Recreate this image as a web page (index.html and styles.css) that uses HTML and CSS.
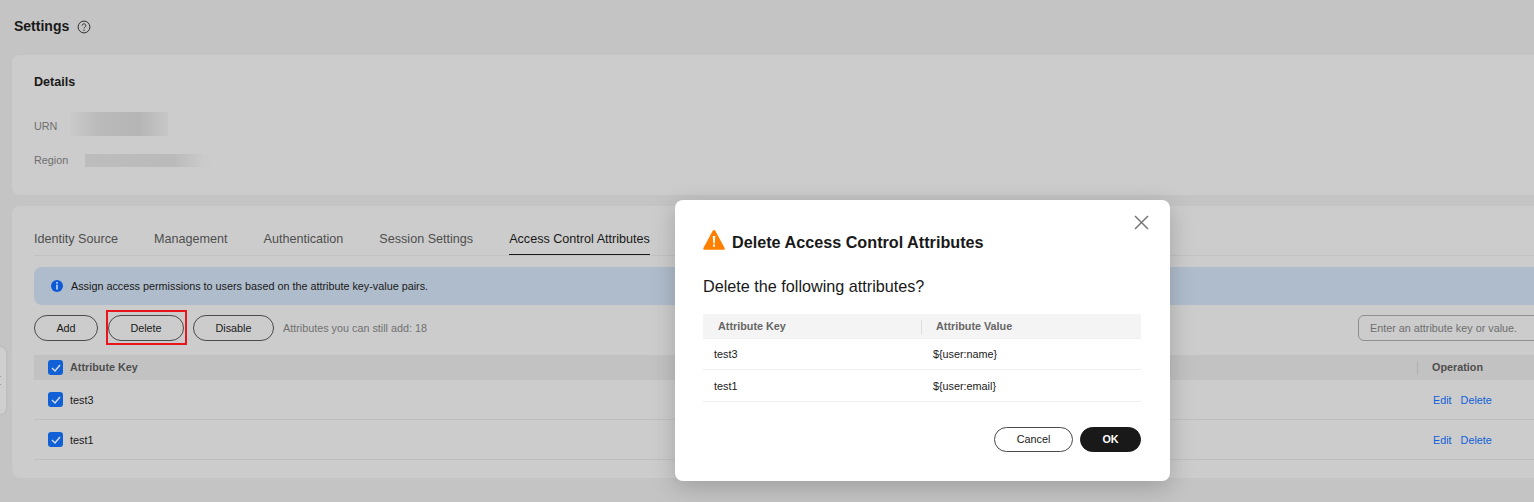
FILE: index.html
```html
<!DOCTYPE html>
<html lang="en">
<head>
<meta charset="utf-8">
<title>Settings</title>
<link rel="stylesheet" href="styles.css">
</head>
<body>
<div class="page">
  <div class="page-head">
    <h1>Settings</h1>
    <svg class="help" width="14" height="14" viewBox="0 0 14 14"><circle cx="7" cy="7" r="5.9" fill="none" stroke="#333" stroke-width="1"/><path d="M5.2 5.6a1.8 1.8 0 1 1 2.8 1.5c-.7.4-1 .7-1 1.3" fill="none" stroke="#333" stroke-width="1"/><circle cx="7" cy="10.2" r=".7" fill="#333"/></svg>
  </div>
  <section class="card details">
    <h2>Details</h2>
    <div class="field urn"><span class="label">URN</span><span class="blur-urn"></span></div>
    <div class="field region"><span class="label">Region</span><span class="blur-region"></span></div>
  </section>
  <section class="card main">
    <nav class="tabs">
      <span>Identity Source</span><span>Management</span><span>Authentication</span><span>Session Settings</span><span class="active">Access Control Attributes</span>
    </nav>
    <div class="notice">
      <svg width="12" height="12" viewBox="0 0 12 12"><circle cx="6" cy="6" r="6" fill="#0d5ad6"/><rect x="5.2" y="2" width="1.6" height="1.6" fill="#c9d6ea"/><rect x="5.2" y="4.6" width="1.6" height="5" fill="#c9d6ea"/></svg>
      <span>Assign access permissions to users based on the attribute key-value pairs.</span>
    </div>
    <div class="toolbar">
      <button class="btn add">Add</button>
      <button class="btn del">Delete</button>
      <button class="btn dis">Disable</button>
      <span class="quota">Attributes you can still add: 18</span>
      <div class="search">Enter an attribute key or value.</div>
    </div>
    <div class="row head">
      <span class="check"><svg width="10" height="8" viewBox="0 0 10 8"><path d="M1 4l3 3 5-6" fill="none" stroke="#d5dfee" stroke-width="1.4"/></svg></span>
      <span class="key">Attribute Key</span>
      <span class="op"><i class="sep"></i>Operation</span>
    </div>
    <div class="row">
      <span class="check"><svg width="10" height="8" viewBox="0 0 10 8"><path d="M1 4l3 3 5-6" fill="none" stroke="#d5dfee" stroke-width="1.4"/></svg></span>
      <span class="key val">test3</span>
      <span class="op links"><a>Edit</a><a>Delete</a></span>
    </div>
    <div class="row">
      <span class="check"><svg width="10" height="8" viewBox="0 0 10 8"><path d="M1 4l3 3 5-6" fill="none" stroke="#d5dfee" stroke-width="1.4"/></svg></span>
      <span class="key val">test1</span>
      <span class="op links"><a>Edit</a><a>Delete</a></span>
    </div>
  </section>
</div>
<div class="handle"><i></i><i></i></div>
<div class="highlight"></div>
<div class="dialog">
  <svg class="close" width="15" height="15" viewBox="0 0 15 15"><path d="M1 1l13 13M14 1L1 14" stroke="#777" stroke-width="1.5" fill="none"/></svg>
  <div class="dlg-title">
    <svg class="warn" width="22" height="20" viewBox="0 0 22 20"><path d="M11 0c.6 0 1 .3 1.300.8l9.300 17.200c.4.900-.1 1.800-1 1.800H1.400c-.9 0-1.400-.9-1-1.800L9.700.8c.3-.5.700-.8 1.300-.8z" fill="#ff8000"/><path d="M9.700 6h2.600l-.6 7.500h-1.400z" fill="#fff"/><rect x="10" y="14.500" width="2" height="2.200" fill="#fff"/></svg>
    <h3>Delete Access Control Attributes</h3>
  </div>
  <p class="question">Delete the following attributes?</p>
  <div class="dlg-table">
    <div class="dlg-row dlg-head"><span class="k">Attribute Key</span><span class="v"><i class="sep"></i>Attribute Value</span></div>
    <div class="dlg-row"><span class="k">test3</span><span class="v">${user:name}</span></div>
    <div class="dlg-row dlg-last"><span class="k">test1</span><span class="v">${user:email}</span></div>
  </div>
  <div class="dlg-actions">
    <button class="btn cancel">Cancel</button>
    <button class="btn ok">OK</button>
  </div>
</div>
</body>
</html>
```
FILE: styles.css
```css
* { box-sizing: border-box; }
html, body { margin: 0; height: 502px; overflow: hidden; }
body { background: #c4c4c4; font-family: "Liberation Sans", Arial, sans-serif; color: #191919; position: relative; }
.page { padding: 0 0 0 12px; width: 1546px; }
.page-head { height: 55px; display: flex; align-items: center; padding: 0 0 4px 2px; gap: 8px; }
h1 { font-size: 14px; font-weight: 700; margin: 0; }
.help { margin-top: 2px; }
.card { background: #cccccc; border-radius: 8px 0 0 8px; }
.details { height: 140px; padding: 19px 22px; }
h2 { font-size: 12.600px; font-weight: 700; margin: 0; line-height: 16px; }
.field { display: flex; align-items: center; font-size: 10.800px; color: #6e6e6e; }
.urn { margin-top: 22px; height: 24px; }
.urn .label { width: 37px; padding-top: 4px; }
.blur-urn { width: 97px; height: 24px; background: linear-gradient(90deg, #c9c9c9, #bababa 30%, #b5b5b5 70%, #c7c7c7); }
.region { margin-top: 18px; height: 13px; }
.region .label { width: 51px; padding-bottom: 2px; }
.blur-region { width: 126px; height: 13px; background: linear-gradient(90deg, #bdbdbd, #bababa 70%, #cbcbcb 95%); }
.main { margin-top: 11px; height: 272px; padding: 0 0 0 22px; }
.tabs { display: flex; gap: 36px; height: 50px; font-size: 12.600px; color: #4e4e4e; align-items: flex-start; padding-top: 24px; border-bottom: 1px solid #c2c2c2; }
.tabs span { height: 25px; line-height: 19px; }
.tabs .active { color: #191919; border-bottom: 1px solid #191919; }
.notice { margin-top: 11px; height: 38px; background: #afbccb; border-radius: 8px 0 0 8px; display: flex; align-items: center; gap: 8px; padding-left: 17px; font-size: 10.800px; color: #191919; }
.toolbar { margin-top: 10px; height: 26px; display: flex; align-items: center; position: relative; }
.btn { height: 26px; border-radius: 13px; border: 1px solid #4a4a4a; background: transparent; font: 10.800px "Liberation Sans", Arial, sans-serif; color: #191919; padding: 0; }
.add { width: 64px; }
.del { width: 76px; margin-left: 10px; }
.dis { width: 81px; margin-left: 9px; }
.quota { margin-left: 9px; font-size: 10.800px; color: #707070; }
.search { position: absolute; left: 1324px; top: 0; width: 200px; height: 26px; border: 1px solid #8f8f8f; border-radius: 6px 0 0 6px; font-size: 10.800px; color: #6e6e6e; line-height: 24px; padding-left: 11px; }
.row { height: 40px; border-bottom: 1px solid #c0c0c0; display: flex; align-items: center; padding-left: 14px; position: relative; font-size: 10.800px; }
.row.head { margin-top: 14px; height: 25px; background: #c2c2c2; border-bottom: 0; font-weight: 700; color: #4e4e4e; }
.row.head .key, .row.head .op { padding-bottom: 1px; }
.check { width: 15px; height: 15px; background: #1160d6; border-radius: 3px; display: flex; align-items: center; justify-content: center; }
.key { margin-left: 7px; }
.val { color: #191919; }
.op { position: absolute; left: 1398px; display: flex; align-items: center; }
.row.head .sep { position: absolute; left: -15px; top: 0; width: 1px; height: 14px; background: #b0b0b0; }
.links { padding-left: 1px; }
.links a { color: #0f5fd8; margin-right: 9px; }
.handle { position: absolute; left: -10px; top: 347px; width: 16px; height: 67px; background: #cfcfcf; border-radius: 6px; box-shadow: 0 0 3px rgba(0,0,0,.1); display: flex; flex-direction: column; align-items: flex-end; justify-content: center; gap: 7px; padding-right: 5px; }
.handle i { width: 1px; height: 1px; background: #999; }
.highlight { position: absolute; left: 106px; top: 310px; width: 81px; height: 35px; border: 2px solid #e8151b; }
.dialog { position: absolute; left: 675px; top: 200px; width: 495px; height: 281px; background: #fff; border-radius: 8px; padding: 30px 29px 0 28px; box-shadow: 0 6px 24px rgba(0,0,0,.2); }
.close { position: absolute; right: 21px; top: 15px; }
.dlg-title { display: flex; align-items: center; gap: 7px; height: 24px; }
.warn { margin-top: -4px; }
h3 { margin: 0; font-size: 16.200px; font-weight: 700; }
.question { margin: 22px 0 0; font-size: 16.200px; line-height: 20px; color: #191919; }
.dlg-table { margin-top: 18px; font-size: 10.800px; }
.dlg-row { height: 31.300px; display: flex; align-items: center; border-bottom: 1px solid #efefef; }
.dlg-last { padding-top: 1px; }
.dlg-head { height: 25px; background: #f4f4f4; font-weight: 700; color: #666; }
.k { width: 230px; padding-left: 11px; }
.dlg-head .k { padding-left: 15px; }
.v { position: relative; }
.dlg-head .v { margin-left: 3px; }
.dlg-head .sep { position: absolute; left: -15px; top: 0; width: 1px; height: 14px; background: #ddd; }
.dlg-actions { display: flex; justify-content: flex-end; gap: 7px; margin-top: 25px; }
.cancel { width: 79px; height: 25px; background: #fff; }
.ok { width: 61px; height: 25px; background: #191919; border-color: #191919; color: #fff; font-weight: 700; }
```
